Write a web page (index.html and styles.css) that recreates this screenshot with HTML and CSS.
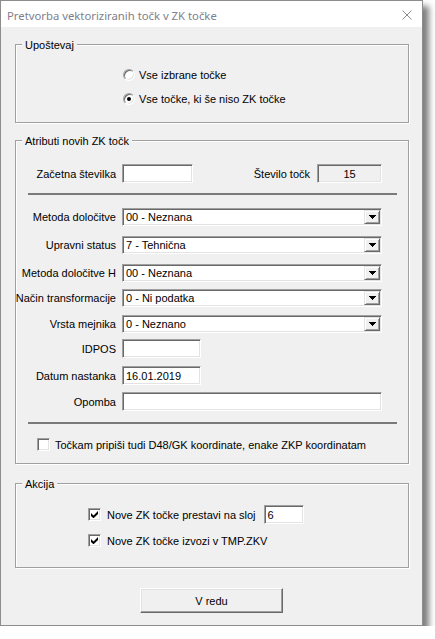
FILE: index.html
```html
<!DOCTYPE html>
<html lang="sl">
<head>
<meta charset="utf-8">
<title>Pretvorba vektoriziranih točk v ZK točke</title>
<link rel="stylesheet" href="styles.css">
</head>
<body>
<div class="window">
  <div class="titlebar">
    <span class="title">Pretvorba vektoriziranih točk v ZK točke</span>
    <svg class="close" width="10" height="10" viewBox="0 0 10 10"><path d="M0.5 0.5 L9.5 9.5 M9.5 0.5 L0.5 9.5" stroke="#8a8a8a" stroke-width="1" fill="none"/></svg>
  </div>
  <div class="content">
    <div class="group g1">
      <div class="legend">Upoštevaj</div>
      <div class="opt opt1"><span class="radio"></span><span class="opt-text">Vse izbrane točke</span></div>
      <div class="opt opt2"><span class="radio on"></span><span class="opt-text">Vse točke, ki še niso ZK točke</span></div>
    </div>

    <div class="group g2">
      <div class="legend">Atributi novih ZK točk</div>
      <div class="row r-start">
        <span class="label">Začetna številka</span>
        <div class="field w-start"></div>
        <span class="label-count">Število točk</span>
        <div class="field ro w-count">15</div>
      </div>
      <div class="sep sep1"></div>
      <div class="row r-combo1">
        <span class="label">Metoda določitve</span>
        <div class="field combo"><span class="combo-text">00 - Neznana</span><span class="dd"><svg width="7" height="4" viewBox="0 0 7 4" shape-rendering="crispEdges"><rect x="0" y="0" width="7" height="1"/><rect x="1" y="1" width="5" height="1"/><rect x="2" y="2" width="3" height="1"/><rect x="3" y="3" width="1" height="1"/></svg></span></div>
      </div>
      <div class="row r-combo2">
        <span class="label">Upravni status</span>
        <div class="field combo"><span class="combo-text">7 - Tehnična</span><span class="dd"><svg width="7" height="4" viewBox="0 0 7 4" shape-rendering="crispEdges"><rect x="0" y="0" width="7" height="1"/><rect x="1" y="1" width="5" height="1"/><rect x="2" y="2" width="3" height="1"/><rect x="3" y="3" width="1" height="1"/></svg></span></div>
      </div>
      <div class="row r-combo3">
        <span class="label">Metoda določitve H</span>
        <div class="field combo"><span class="combo-text">00 - Neznana</span><span class="dd"><svg width="7" height="4" viewBox="0 0 7 4" shape-rendering="crispEdges"><rect x="0" y="0" width="7" height="1"/><rect x="1" y="1" width="5" height="1"/><rect x="2" y="2" width="3" height="1"/><rect x="3" y="3" width="1" height="1"/></svg></span></div>
      </div>
      <div class="row r-combo4">
        <span class="label">Način transformacije</span>
        <div class="field combo"><span class="combo-text">0 - Ni podatka</span><span class="dd"><svg width="7" height="4" viewBox="0 0 7 4" shape-rendering="crispEdges"><rect x="0" y="0" width="7" height="1"/><rect x="1" y="1" width="5" height="1"/><rect x="2" y="2" width="3" height="1"/><rect x="3" y="3" width="1" height="1"/></svg></span></div>
      </div>
      <div class="row r-combo5">
        <span class="label">Vrsta mejnika</span>
        <div class="field combo"><span class="combo-text">0 - Neznano</span><span class="dd"><svg width="7" height="4" viewBox="0 0 7 4" shape-rendering="crispEdges"><rect x="0" y="0" width="7" height="1"/><rect x="1" y="1" width="5" height="1"/><rect x="2" y="2" width="3" height="1"/><rect x="3" y="3" width="1" height="1"/></svg></span></div>
      </div>
      <div class="row r-idpos">
        <span class="label">IDPOS</span>
        <div class="field w-short"></div>
      </div>
      <div class="row r-datum">
        <span class="label">Datum nastanka</span>
        <div class="field w-short">16.01.2019</div>
      </div>
      <div class="row r-opomba">
        <span class="label">Opomba</span>
        <div class="field w-long"></div>
      </div>
      <div class="sep sep2"></div>
      <div class="check-row r-d48">
        <span class="checkbox"></span>
        <span class="check-text">Točkam pripiši tudi D48/GK koordinate, enake ZKP koordinatam</span>
      </div>
    </div>

    <div class="group g3">
      <div class="legend">Akcija</div>
      <div class="check-row r-sloj">
        <span class="checkbox"><svg width="7" height="7" viewBox="0 0 7 7"><polygon points="0,2 2.5,4.5 7,0 7,3 2.5,7.3 0,5" fill="#000"/></svg></span>
        <span class="check-text">Nove ZK točke prestavi na sloj</span>
        <div class="field w-layer">6</div>
      </div>
      <div class="check-row r-tmp">
        <span class="checkbox"><svg width="7" height="7" viewBox="0 0 7 7"><polygon points="0,2 2.5,4.5 7,0 7,3 2.5,7.3 0,5" fill="#000"/></svg></span>
        <span class="check-text">Nove ZK točke izvozi v TMP.ZKV</span>
      </div>
    </div>

    <div class="btn">V redu</div>
  </div>
</div>
</body>
</html>
```

FILE: styles.css
```css
html, body {
  margin: 0;
  padding: 0;
  background: #ffffff;
}

body {
  font-family: "Liberation Sans", Arial, sans-serif;
  font-size: 11px;
  color: #000;
}

.window {
  width: 423px;
  box-sizing: border-box;
  border: 1px solid #8d8d8d;
  background: #f0f0f0;
  box-shadow: 6px 6px 6px rgba(0, 0, 0, 0.5);
}

.titlebar {
  height: 26px;
  background: #ffffff;
  display: flex;
  align-items: center;
  padding: 0 10px 0 6px;
}

.title {
  font-family: "Noto Sans", "Open Sans", sans-serif;
  font-size: 11.3px;
  color: #80808c;
  flex: 1;
  padding-top: 2px;
}

.close {
  display: block;
  margin-top: 2px;
}

.content {
  display: flex;
  flex-direction: column;
  padding: 17px 0 12px 14px;
}

.group {
  width: 394px;
  box-sizing: border-box;
  border: 1px solid #a0a0a0;
  box-shadow: inset 1px 1px 0 #fff, 1px 1px 0 #fff;
  display: flex;
  flex-direction: column;
}

.g2 { margin-top: 17px; padding-bottom: 12px; }
.g3 { margin-top: 19px; padding-bottom: 20px; }
.g1 { padding-bottom: 17px; }

.legend {
  align-self: flex-start;
  margin: -6px 0 0 6px;
  padding: 0 3px;
  line-height: 13px;
  background: #f0f0f0;
  white-space: nowrap;
}

/* radio options */
.opt {
  display: flex;
  align-items: center;
  height: 13px;
  padding-left: 107px;
}
.opt1 { margin-top: 16px; }
.opt2 { margin-top: 11px; }

.opt-text { margin-left: 4px; white-space: nowrap; }

.radio {
  width: 12px;
  height: 12px;
  box-sizing: border-box;
  border-radius: 50%;
  border: 1px solid;
  border-color: #a0a0a0 #fff #fff #a0a0a0;
  box-shadow: inset 1px 1px 0 #696969, inset -1px -1px 0 #e3e3e3;
  background: #fff;
  display: flex;
  align-items: center;
  justify-content: center;
}
.radio.on::after {
  content: "";
  width: 4px;
  height: 4px;
  border-radius: 50%;
  background: #000;
}

/* rows with label + control */
.row {
  display: flex;
  align-items: center;
  padding-right: 26px;
}

.label {
  width: 100px;
  flex: none;
  display: flex;
  justify-content: flex-end;
  white-space: nowrap;
  margin-right: 6px;
}

.r-start { margin-top: 16px; height: 19px; }
.r-combo1 { margin-top: 13px; height: 18px; }
.r-combo2 { margin-top: 10px; height: 18px; }
.r-combo3 { margin-top: 10px; height: 18px; }
.r-combo4 { margin-top: 7px; height: 18px; }
.r-combo5 { margin-top: 8px; height: 18px; }
.r-idpos { margin-top: 6px; height: 19px; }
.r-datum { margin-top: 8px; height: 19px; }
.r-opomba { margin-top: 7px; height: 19px; }

.field {
  box-sizing: border-box;
  height: 19px;
  border: 1px solid;
  border-color: #a0a0a0 #fff #fff #a0a0a0;
  box-shadow: inset 1px 1px 0 #696969, inset -1px -1px 0 #e3e3e3;
  background: #fff;
  padding: 0 3px;
  display: flex;
  align-items: center;
  white-space: nowrap;
}

.w-start { width: 71px; }
.w-short { width: 79px; }
.w-long { flex: 1; }
.w-count { width: 65px; }
.w-layer { width: 40px; margin-left: 8px; }

.ro {
  background: #f0f0f0;
  justify-content: center;
}

.label-count {
  margin-left: auto;
  margin-right: 7px;
  white-space: nowrap;
}

.combo {
  flex: 1;
  height: 18px;
  padding: 1px 1px 1px 3px;
}

.combo-text { flex: 1; }

.dd {
  width: 16px;
  height: 14px;
  box-sizing: border-box;
  background: #f0f0f0;
  border: 1px solid;
  border-color: #e3e3e3 #696969 #696969 #e3e3e3;
  box-shadow: inset 1px 1px 0 #fff, inset -1px -1px 0 #a0a0a0;
  display: flex;
  align-items: center;
  justify-content: center;
}
.dd svg { display: block; fill: #000; }

.sep {
  height: 2px;
  background: #7a7a7a;
  margin: 0 11px 0 12px;
}
.sep1 { margin-top: 10px; }
.sep2 { margin-top: 11px; }

.check-row {
  display: flex;
  align-items: center;
  min-height: 13px;
}

.checkbox {
  width: 13px;
  height: 13px;
  flex: none;
  box-sizing: border-box;
  border: 1px solid;
  border-color: #a0a0a0 #fff #fff #a0a0a0;
  box-shadow: inset 1px 1px 0 #696969, inset -1px -1px 0 #e3e3e3;
  background: #fff;
  display: flex;
  align-items: center;
  justify-content: center;
}
.checkbox svg { display: block; }

.check-text { white-space: nowrap; }

.r-d48 { margin-top: 14px; padding-left: 21px; }
.r-d48 .check-text { margin-left: 5px; }

.r-sloj { margin-top: 14px; padding-left: 72px; height: 19px; }
.r-tmp { margin-top: 10px; padding-left: 72px; }
.r-sloj .check-text, .r-tmp .check-text { margin-left: 6px; }

.btn {
  align-self: center;
  margin: 20px 0 0 -14px;
  width: 143px;
  height: 25px;
  box-sizing: border-box;
  border: 1px solid;
  border-color: #fff #696969 #696969 #fff;
  box-shadow: inset -1px -1px 0 #a0a0a0, inset 1px 1px 0 #e3e3e3;
  background: #f0f0f0;
  display: flex;
  align-items: center;
  justify-content: center;
}
```
